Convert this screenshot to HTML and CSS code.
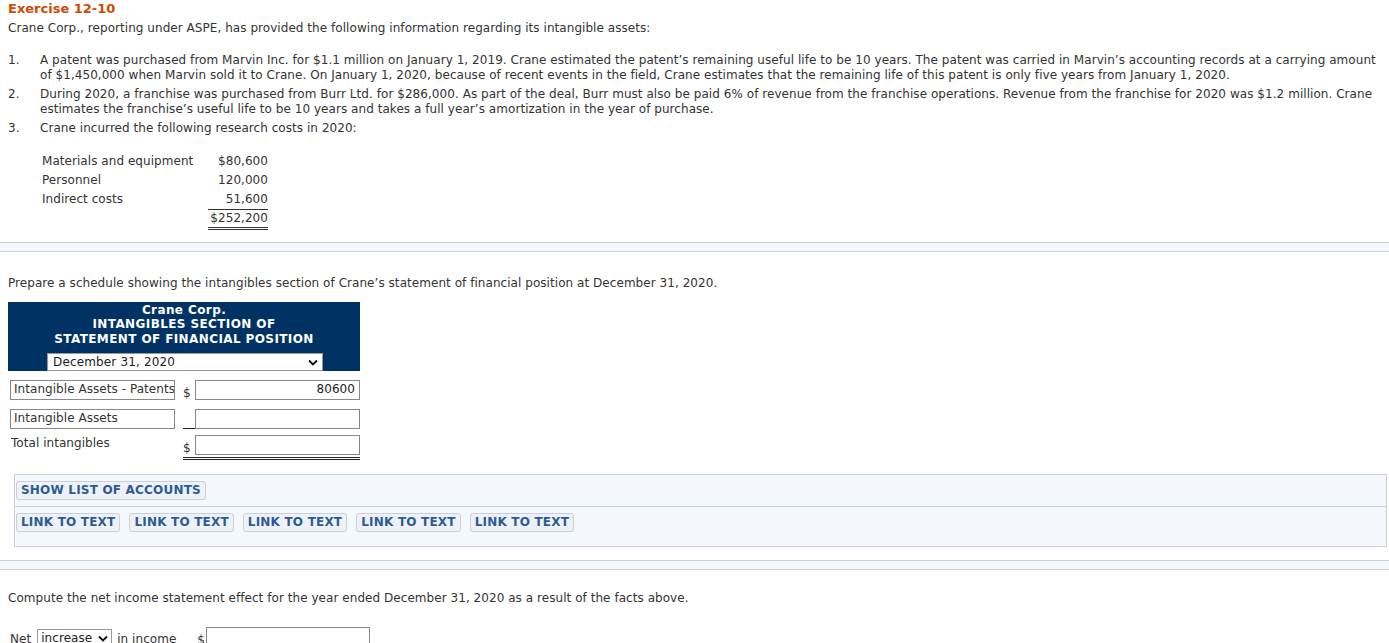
FILE: index.html
```html
<!DOCTYPE html>
<html lang="en">
<head>
<meta charset="UTF-8" />
<title>Exercise 12-10</title>
<link rel="stylesheet" href="styles.css">
</head>
<body>

<div class="section intro">
  <div class="ex-title">Exercise 12-10</div>
  <p class="lead">Crane Corp., reporting under ASPE, has provided the following information regarding its intangible assets:</p>

  <ol class="facts">
    <li><span class="num">1.</span><span class="txt">A patent was purchased from Marvin Inc. for $1.1 million on January 1, 2019. Crane estimated the patent’s remaining useful life to be 10 years. The patent was carried in Marvin’s accounting records at a carrying amount of $1,450,000 when Marvin sold it to Crane. On January 1, 2020, because of recent events in the field, Crane estimates that the remaining life of this patent is only five years from January 1, 2020.</span></li>
    <li><span class="num">2.</span><span class="txt">During 2020, a franchise was purchased from Burr Ltd. for $286,000. As part of the deal, Burr must also be paid 6% of revenue from the franchise operations. Revenue from the franchise for 2020 was $1.2 million. Crane estimates the franchise’s useful life to be 10 years and takes a full year’s amortization in the year of purchase.</span></li>
    <li><span class="num">3.</span><span class="txt">Crane incurred the following research costs in 2020:</span></li>
  </ol>

  <table class="costs">
    <tr><td class="lbl">Materials and equipment</td><td class="amt">$80,600</td></tr>
    <tr><td class="lbl">Personnel</td><td class="amt">120,000</td></tr>
    <tr><td class="lbl">Indirect costs</td><td class="amt under">51,600</td></tr>
    <tr><td class="lbl"></td><td class="amt dbl">$252,200</td></tr>
  </table>
</div>

<div class="divider"></div>

<div class="section part">
  <p class="q">Prepare a schedule showing the intangibles section of Crane’s statement of financial position at December 31, 2020.</p>

  <div class="sched">
    <div class="sched-head">
      <div>Crane Corp.</div>
      <div>INTANGIBLES SECTION OF</div>
      <div>STATEMENT OF FINANCIAL POSITION</div>
      <div class="date-sel">
        <span>December 31, 2020</span>
        <svg width="10" height="7" viewBox="0 0 10 7"><path d="M1 1.5 L5 5.5 L9 1.5" fill="none" stroke="#111" stroke-width="1.8"/></svg>
      </div>
    </div>

    <div class="row">
      <div class="acct">Intangible Assets - Patents</div>
      <span class="cur">$</span>
      <div class="val">80600</div>
    </div>
    <div class="row">
      <div class="acct">Intangible Assets</div>
      <span class="cur blank"></span>
      <div class="val"></div>
    </div>
    <div class="row total">
      <div class="acct plain">Total intangibles</div>
      <div class="tot-cell">
        <span class="cur">$</span>
        <div class="val"></div>
      </div>
    </div>
  </div>

  <div class="tools">
    <div class="tools-row">
      <button class="btn">SHOW LIST OF ACCOUNTS</button>
    </div>
    <div class="tools-row links">
      <button class="btn">LINK TO TEXT</button>
      <button class="btn">LINK TO TEXT</button>
      <button class="btn">LINK TO TEXT</button>
      <button class="btn">LINK TO TEXT</button>
      <button class="btn">LINK TO TEXT</button>
    </div>
  </div>
</div>

<div class="divider"></div>

<div class="section part second">
  <p class="q">Compute the net income statement effect for the year ended December 31, 2020 as a result of the facts above.</p>
  <div class="net-row">
    <span>Net</span>
    <div class="small-sel">
      <span>increase</span>
      <svg width="10" height="7" viewBox="0 0 10 7"><path d="M1 1.5 L5 5.5 L9 1.5" fill="none" stroke="#111" stroke-width="1.8"/></svg>
    </div>
    <span class="in-inc">in income</span>
    <span class="cur">$</span>
    <div class="val net-val"></div>
  </div>
</div>

</body>
</html>
```

FILE: styles.css
```css
/* Reset */
* {
  margin: 0; padding: 0; box-sizing: border-box;
}
body {
  background: #fff;
  color: #333;
  font-family: "DejaVu Sans", Verdana, sans-serif;
  font-size: 12px;
  line-height: 15px;
  letter-spacing: 0.05px;
}
.section {
  padding: 0 8px;
}
.intro {
  padding-top: 1px;
  padding-bottom: 12px;
}
.ex-title {
  color: #d04a02;
  font-weight: bold;
  font-size: 13px;
  line-height: 16px;
  letter-spacing: 0;
}
.lead {
  margin-top: 4px;
}
.facts {
  list-style: none;
  margin: 17px -6px 0 0;
}
.facts li {
  display: flex;
  margin-bottom: 4px;
}
.facts .num {
  width: 32px;
  flex: none;
}
.costs {
  border-collapse: collapse;
  margin: 16px 0 0 32px;
}
.costs td {
  height: 19px;
  padding: 0 2px;
}
.costs .lbl {
  width: 168px;
}
.costs .amt {
  text-align: right;
  width: 60px;
  padding-right: 0;
}
.costs .under {
  border-bottom: 1px solid #333;
}
.costs .dbl {
  border-bottom: 3px double #333;
}
.divider {
  height: 10px;
  background: #f4f7fb;
  border-top: 1px solid #cbd1dc;
  border-bottom: 1px solid #cbd1dc;
}
.part {
  padding-top: 24px;
}
.part.second {
  padding-top: 21px;
}
.q {
  margin-bottom: 11px;
}
.sched {
  width: 352px;
}
.sched-head {
  background: #003363;
  color: #fff;
  font-weight: bold;
  font-size: 12px;
  line-height: 14.5px;
  letter-spacing: 0.4px;
  text-align: center;
  padding-top: 1px;
  height: 69px;
}
.date-sel {
  display: flex;
  justify-content: space-between;
  align-items: center;
  width: 276px;
  height: 18px;
  margin: 7px 0 0 39px;
  padding: 0 4px 0 5px;
  background: #fff;
  color: #222;
  font-weight: normal;
  letter-spacing: 0.15px;
  text-align: left;
  border: 1px solid #999;
}
.row {
  display: flex;
  align-items: flex-end;
  margin-top: 9px;
  padding-left: 2px;
}
.acct {
  width: 165px;
  height: 20px;
  border: 1px solid #888;
  padding: 1px 3px;
  white-space: nowrap;
  overflow: hidden;
}
.acct.plain {
  border-color: transparent;
  padding-left: 0;
  align-self: flex-start;
  margin-top: -1px;
}
.cur {
  width: 20px;
  text-align: left;
  padding-left: 8px;
  line-height: 14px;
}
.cur.blank {
  margin-left: 8px;
  padding: 0;
  height: 1px;
  width: 12px;
  border-bottom: 1px solid #222;
}
.val {
  width: 165px;
  height: 20px;
  border: 1px solid #888;
  text-align: right;
  padding: 1px 4px;
  color: #222;
}
.tot-cell {
  display: flex;
  align-items: flex-end;
  border-bottom: 3px double #222;
  padding-bottom: 2px;
  margin-left: 8px;
}
.tot-cell .cur {
  padding-left: 0;
  width: 12px;
}
.total {
  margin-top: 6px;
}
.tools {
  margin: 14px -6px 13px 6px;
  background: #f4f7fb;
  border: 1px solid #cbd1dc;
}
.tools-row {
  padding: 6px 0 6px 1px;
  display: flex;
}
.tools-row.links {
  border-top: 1px solid #cbd1dc;
  padding-bottom: 14px;
  gap: 9px;
}
.btn {
  font-family: "DejaVu Sans", Verdana, sans-serif;
  font-weight: bold;
  font-size: 12px;
  line-height: 17px;
  height: 19px;
  letter-spacing: 0.2px;
  color: #2c5b94;
  background: #eef2f8;
  border: 1px solid #c9d0db;
  border-radius: 3px;
  padding: 0 4px;
}
.net-row {
  display: flex;
  align-items: flex-end;
  margin-top: 21px;
  padding-left: 2px;
}
.small-sel {
  display: flex;
  align-items: center;
  gap: 6px;
  height: 18px;
  border: 1px solid #999;
  border-bottom: none;
  padding: 0 3px;
  margin: 0 5px 0 6px;
  color: #222;
}
.in-inc {
  width: 80px;
}
.net-row .cur {
  padding-left: 0;
  width: 9px;
}
.net-val {
  width: 164px;
}
```
